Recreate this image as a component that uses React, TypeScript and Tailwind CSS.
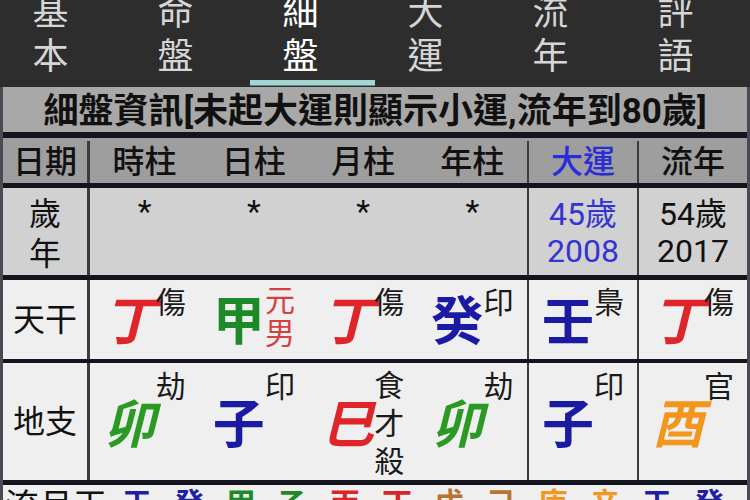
import React from "react";

const FONT = "font-['Roboto','Noto_Sans_CJK_TC','Noto_Sans_CJK_JP',sans-serif]";

type P = {
  ch: string;
  cls: string;
  ann: string[];
  annCls?: string;
  charMt: string;
  annMt: string;
  annLead?: string;
};

function Pillar({ ch, cls, ann, annCls, charMt, annMt, annLead }: P) {
  return (
    <div className="flex justify-center items-start">
      <span className={`text-[52px] leading-none font-bold ${cls} ${charMt}`}>{ch}</span>
      <div
        className={`flex flex-col items-center text-[30px] ${annLead ?? "leading-none"} ${annCls ?? "text-[#1a1a1a]"} ${annMt}`}
      >
        {ann.map((a, i) => (
          <span key={i}>{a}</span>
        ))}
      </div>
    </div>
  );
}

const RED = "text-[#e0252a] italic";
const GREEN = "text-[#1d8a28]";
const GREEN_I = "text-[#2a9a25] italic";
const BLUE = "text-[#1a1aa2]";
const ORANGE = "text-[#f2961e] italic";

export default function App() {
  const tabs = [
    ["基", "本"],
    ["命", "盤"],
    ["細", "盤"],
    ["大", "運"],
    ["流", "年"],
    ["評", "語"],
  ];
  const bottom: [string, string][] = [
    ["壬", "text-[#1f1fa0]"],
    ["癸", "text-[#1f1fa0]"],
    ["甲", "text-[#1d8a28]"],
    ["乙", "text-[#1d8a28]"],
    ["丙", "text-[#d82525]"],
    ["丁", "text-[#d82525]"],
    ["戊", "text-[#b5742f]"],
    ["己", "text-[#b5742f]"],
    ["庚", "text-[#f2961e]"],
    ["辛", "text-[#f2961e]"],
    ["壬", "text-[#1f1fa0]"],
    ["癸", "text-[#1f1fa0]"],
  ];
  return (
    <div className={`w-[750px] h-[500px] overflow-hidden bg-[#2d2d2d] ${FONT}`}>
      {/* Tab bar */}
      <div className="h-[87px] flex flex-col overflow-hidden bg-[#2d2d2d]">
        <div className="flex ml-[-12px] mt-[-9px]">
          {tabs.map((t, i) => (
            <div
              key={i}
              className={`w-[125px] shrink-0 flex flex-col items-center text-[36px] leading-[44px] ${
                i === 2 ? "text-white" : "text-[#d6d6d6]"
              }`}
            >
              <span>{t[0]}</span>
              <span>{t[1]}</span>
            </div>
          ))}
        </div>
        <div className="mt-auto mb-[1px] ml-[250px] w-[125px] h-[6px] bg-[#a6d5d3] border-b border-[#5f8f8d]" />
      </div>

      {/* Table */}
      <div className="border-x-[3px] border-[#4a4a55] bg-[#efefef] text-[#111]">
        {/* Title */}
        <div className="h-[45px] bg-[#a8a8a8] text-center text-[35px] font-bold pt-[4px] leading-[41px] text-[#111] whitespace-nowrap">
          細盤資訊[未起大運則顯示小運,流年到80歲]
        </div>
        <div className="h-[6px] bg-[#14141f]" />

        {/* Header row */}
        <div className="flex h-[45px] bg-[#9e9e9e] text-[32px] font-medium pt-[3px] leading-[42px]">
          <div className="w-[87px] border-r-[3px] border-[#3c3c3c] text-center">日期</div>
          <div className="w-[439px] border-r-[2px] border-[#3c3c3c] grid grid-cols-4 text-center">
            <span>時柱</span>
            <span>日柱</span>
            <span>月柱</span>
            <span>年柱</span>
          </div>
          <div className="w-[110px] border-r-[2px] border-[#3c3c3c] text-center text-[#2b2bd8]">大運</div>
          <div className="w-[108px] text-center">流年</div>
        </div>
        <div className="h-[5px] bg-[#14141f]" />

        {/* Age/year row */}
        <div className="flex h-[87px] bg-[#d1d1d1] text-[32px]">
          <div className="w-[87px] border-r-[3px] border-[#3c3c3c] flex flex-col items-center justify-center pt-[4px] leading-[40px]">
            <span>歲</span>
            <span>年</span>
          </div>
          <div className="w-[439px] border-r-[2px] border-[#3c3c3c] grid grid-cols-4 text-center leading-none pt-[7px]">
            <span>*</span>
            <span>*</span>
            <span>*</span>
            <span>*</span>
          </div>
          <div className="w-[110px] border-r-[2px] border-[#3c3c3c] flex flex-col items-center justify-center pt-[2px] leading-[37px] text-[#3434d2]">
            <span>45歲</span>
            <span>2008</span>
          </div>
          <div className="w-[108px] flex flex-col items-center justify-center pt-[2px] leading-[37px]">
            <span>54歲</span>
            <span>2017</span>
          </div>
        </div>
        <div className="h-[5px] bg-[#14141f]" />

        {/* 天干 row */}
        <div className="flex h-[79px] bg-[#efefef]">
          <div className="w-[87px] border-r-[3px] border-[#3c3c3c] flex items-center justify-center text-[32px]">
            天干
          </div>
          <div className="w-[439px] border-r-[2px] border-[#3c3c3c] grid grid-cols-4">
            <Pillar ch="丁" cls={RED} ann={["傷"]} charMt="mt-[17px]" annMt="mt-[8px]" />
            <Pillar
              ch="甲"
              cls={GREEN}
              ann={["元", "男"]}
              annCls="text-[#d4403f]"
              annLead="leading-[33px]"
              charMt="mt-[17px]"
              annMt="mt-[4px]"
            />
            <Pillar ch="丁" cls={RED} ann={["傷"]} charMt="mt-[17px]" annMt="mt-[8px]" />
            <Pillar ch="癸" cls={BLUE} ann={["印"]} charMt="mt-[17px]" annMt="mt-[8px]" />
          </div>
          <div className="w-[110px] border-r-[2px] border-[#3c3c3c]">
            <Pillar ch="壬" cls={BLUE} ann={["梟"]} charMt="mt-[17px]" annMt="mt-[8px]" />
          </div>
          <div className="w-[108px]">
            <Pillar ch="丁" cls={RED} ann={["傷"]} charMt="mt-[17px]" annMt="mt-[8px]" />
          </div>
        </div>
        <div className="h-[4px] bg-[#14141f]" />

        {/* 地支 row */}
        <div className="flex h-[117px] bg-[#efefef]">
          <div className="w-[87px] border-r-[3px] border-[#3c3c3c] flex items-center justify-center text-[32px]">
            地支
          </div>
          <div className="w-[439px] border-r-[2px] border-[#3c3c3c] grid grid-cols-4">
            <Pillar ch="卯" cls={GREEN_I} ann={["劫"]} charMt="mt-[37px]" annMt="mt-[9px]" />
            <Pillar ch="子" cls={BLUE} ann={["印"]} charMt="mt-[37px]" annMt="mt-[9px]" />
            <Pillar
              ch="巳"
              cls={RED}
              ann={["食", "才", "殺"]}
              annLead="leading-[38px]"
              charMt="mt-[37px]"
              annMt="mt-[4px]"
            />
            <Pillar ch="卯" cls={GREEN_I} ann={["劫"]} charMt="mt-[37px]" annMt="mt-[9px]" />
          </div>
          <div className="w-[110px] border-r-[2px] border-[#3c3c3c]">
            <Pillar ch="子" cls={BLUE} ann={["印"]} charMt="mt-[37px]" annMt="mt-[9px]" />
          </div>
          <div className="w-[108px]">
            <Pillar ch="酉" cls={ORANGE} ann={["官"]} charMt="mt-[37px]" annMt="mt-[9px]" />
          </div>
        </div>
        <div className="h-[5px] bg-[#14141f]" />

        {/* 流月干 row (cut off) */}
        <div className="flex items-start h-[60px] bg-[#efefef] pt-[4px]">
          <span className="ml-[2px] w-[117px] shrink-0 text-[34px] leading-none">流月干</span>
          {bottom.map(([c, cl], i) => (
            <span key={i} className={`w-[52px] shrink-0 text-[30px] leading-none font-bold ${cl}`}>
              {c}
            </span>
          ))}
        </div>
      </div>
    </div>
  );
}
